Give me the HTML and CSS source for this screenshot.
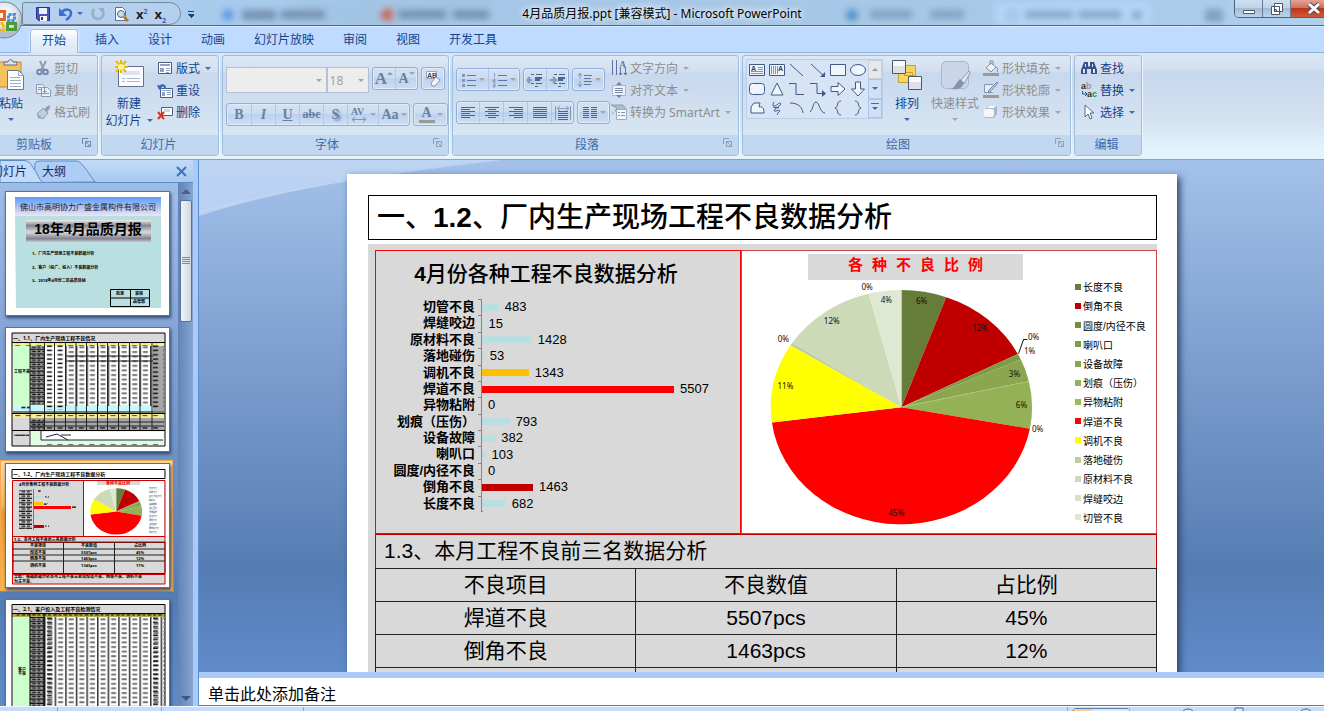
FILE: index.html
```html
<!DOCTYPE html>
<html lang="zh-CN">
<head>
    <meta charset="UTF-8">
    <meta name="viewport" content="width=device-width, initial-scale=1.0">
    <title>4月品质月报.ppt [兼容模式] - Microsoft PowerPoint</title>
    <link rel="stylesheet" href="styles.css">
</head>
<body>
<div class="window">

    <header class="titlebar">
        <svg class="glass" width="1324" height="25" aria-hidden="true">
            <defs><filter id="blur"><feGaussianBlur stdDeviation="3"/></filter></defs>
            <g filter="url(#blur)">
                <path d="M300 0h200l-60 25H260z" fill="#9dbfe0" opacity=".5"/>
                <circle cx="228" cy="15" r="6" fill="#5f9be6"/>
                <path d="M242 10h34v10h-34zM281 10h44v9h-44z" fill="#65809f" opacity=".75"/>
                <path d="M378 15l9-8v16zM386 8h7v13h-7z" fill="#c4705c"/>
                <path d="M398 10h48v9h-48zM453 10h36v9h-36z" fill="#65809f" opacity=".75"/>
                <circle cx="852" cy="15" r="6" fill="#3e84c0" opacity=".8"/>
                <path d="M870 10h42v9h-42zM930 10h34v9h-34z" fill="#7896b8" opacity=".7"/>
                <path d="M995 3h155v22H995z" fill="#b5d6f8"/>
                <circle cx="1012" cy="15" r="5" fill="none" stroke="#7fa4cc" stroke-width="2"/>
                <path d="M1025 10h48v9h-48zM1078 10h44v9h-44z" fill="#7896b8" opacity=".7"/>
                <path d="M1132 11h10v8h-10zM1205 9h18v13h-18z" fill="#6e8fb2" opacity=".7"/>
            </g>
        </svg>
        <div class="quick-access">
            <button class="qa" aria-label="保存"><svg width="16" height="16"><path d="M1.500 1.500h13v13h-11l-2-2z" fill="#4a53c0" stroke="#2b2f8c"/><path d="M4 2h8v6H4z" fill="#e9f0fb"/><path d="M5 10h7v5H5z" fill="#f5f5f5"/><path d="M6 11h2v3H6z" fill="#2b2f8c"/></svg></button>
            <button class="qa" aria-label="撤消"><svg width="16" height="16"><path d="M3 7c4-5 10-4 10 0 0 3-2 5-5 7" fill="none" stroke="#3a6fd0" stroke-width="2.500"/><path d="M1 2v8h8z" fill="#3a6fd0"/></svg><i class="caret"></i></button>
            <button class="qa" aria-label="恢复" disabled><svg width="16" height="16"><path d="M4 3C1 7 3 13 8 13s7-6 4-9" fill="none" stroke="#97aec9" stroke-width="2.500"/><path d="M8 2h6v6z" fill="#97aec9"/></svg></button>
            <button class="qa" aria-label="打印预览"><svg width="16" height="16"><path d="M2.500 1.500h7l3 3v10h-10z" fill="#fff" stroke="#5c6f8d"/><circle cx="8" cy="8" r="3.500" fill="#c5e1f8" stroke="#4d5d78"/><path d="M11 11l4 4" stroke="#b27a20" stroke-width="3"/></svg></button>
            <button class="qa" aria-label="上标"><span class="script">x<sup>2</sup></span></button>
            <button class="qa" aria-label="下标"><span class="script">x<sub>2</sub></span></button>
        </div>
        <h1 class="title">4月品质月报.ppt [兼容模式] - Microsoft PowerPoint</h1>
        <div class="window-buttons">
            <button aria-label="最小化"><svg width="14" height="14"><path d="M1.500 8.500h11v3h-11z" fill="#fff" stroke="#4b5568"/></svg></button>
            <button aria-label="还原"><svg width="14" height="14"><path d="M4.500 1.500h8v8h-8zM1.500 4.500h8v8h-8z" fill="#fff" stroke="#4b5568"/><path d="M4.500 7.500h2v2h-2z" fill="#a9c3df" stroke="#4b5568"/></svg></button>
            <button class="close" aria-label="关闭"><svg width="14" height="14"><path d="M2 2l10 9M12 2L2 11" stroke="#4a4d5c" stroke-width="5"/><path d="M2 2l10 9M12 2L2 11" stroke="#fff" stroke-width="3"/></svg></button>
        </div>
        <button class="orb" aria-label="Office 按钮"><svg width="40" height="42">
            <defs><radialGradient id="orbFill" cx=".5" cy=".35"><stop offset="0" stop-color="#fff"/><stop offset=".65" stop-color="#e3e8f0"/><stop offset="1" stop-color="#b4bfce"/></radialGradient></defs>
            <circle cx="20" cy="21" r="18" fill="url(#orbFill)" stroke="#6f86a5"/>
            <g fill="none" stroke-width="3">
                <path d="M13.500 12.500h7v8h-7z" stroke="#e8641b"/>
                <path d="M24.500 15.500h6v6h-6z" stroke="#4a8fd8" stroke-dasharray="3 1"/>
                <path d="M12.500 24.500h7v7h-7z" stroke="#f2b51c" stroke-dasharray="3 1"/>
                <path d="M23.500 24.500h8v6h-8z" stroke="#4c9a3c"/>
            </g>
        </svg></button>
    </header>

    <nav class="tabs">
        <button class="tab active">开始</button>
        <button class="tab">插入</button>
        <button class="tab">设计</button>
        <button class="tab">动画</button>
        <button class="tab">幻灯片放映</button>
        <button class="tab">审阅</button>
        <button class="tab">视图</button>
        <button class="tab">开发工具</button>
    </nav>

    <div class="ribbon">
        <section class="group group-clipboard">
            <div class="group-body">
                <button class="large large-paste">
                    <svg width="32" height="32"><path d="M3 3h23v25H3z" fill="#f3c25c" stroke="#c08a2c"/><path d="M9 5V3h4c0-3 5-3 5 0h4v3H9z" fill="#dfe3e8" stroke="#646b78"/><path d="M12.500 11.500h11l5 5v14h-16z" fill="#fff" stroke="#66778f"/><path d="M23.500 11.500v5h5M15 18.500h10M15 21.500h11M15 24.500h11M15 27.500h11" fill="none" stroke="#9aadcb"/></svg>
                    <span>粘贴</span><i class="caret"></i>
                </button>
                <div class="stack">
                    <button class="small" disabled><svg width="16" height="16"><path d="M5 1l4 9M11 1L6 10" stroke="#8c9db5" stroke-width="2"/><circle cx="4.500" cy="12" r="2.300" fill="none" stroke="#7488a8" stroke-width="2"/><circle cx="10.500" cy="12" r="2.300" fill="none" stroke="#7488a8" stroke-width="2"/></svg>剪切</button>
                    <button class="small" disabled><svg width="16" height="16"><path d="M1.500 2.500h6l2 2v7h-8zM6.500 5.500h6l3 3v6h-9z" fill="#e9eff7" stroke="#8799b5"/><path d="M8 9.500h4M8 11.500h6M3 5.500h3M3 7.500h3" stroke="#8799b5"/></svg>复制</button>
                    <button class="small" disabled><svg width="16" height="16"><path d="M15 1l-4 2-2 3 3 2 3-4z" fill="#8e9db4"/><path d="M8 4l5 5-5 6-6-5z" fill="#c2cedd" stroke="#8b9bb4"/><path d="M2 10l5 5-4-1z" fill="#8e9db4"/></svg>格式刷</button>
                </div>
            </div>
            <footer><span>剪贴板</span><button class="launcher" aria-label="剪贴板对话框"><svg width="9" height="9"><path d="M.500 6V.500H6M3.500 3.500h5v5h-5zM4 4l4 4" fill="none" stroke="#6c88b0"/></svg></button></footer>
        </section>

        <section class="group group-slides">
            <div class="group-body">
                <button class="large">
                    <svg width="32" height="32"><path d="M5.500 7.500h25v20h-25z" fill="#fafcff" stroke="#62728c"/><path d="M9 12h18v4H9z" fill="#dce4ef"/><path d="M9 19.500h3M14 19.500h13M9 22.500h3M14 22.500h13" stroke="#a6b6ce"/><path d="M8 1v13M2 8h13M3 2l10 11M13 2L3 13" stroke="#f2b800" stroke-width="2"/><circle cx="8" cy="8" r="3" fill="#fff68c"/></svg>
                    <span>新建</span><span>幻灯片<i class="caret"></i></span>
                </button>
                <div class="stack">
                    <button class="small"><svg width="16" height="16"><path d="M1.500 2.500h13v11h-13z" fill="#fff" stroke="#4a5f80"/><path d="M3 4h10v2H3zM3 8h4v4H3z" fill="#8ba2c6"/><path d="M9 8.500h4M9 10.500h4M9 12.500h3" stroke="#8ba2c6"/></svg>版式<i class="caret"></i></button>
                    <button class="small"><svg width="16" height="16"><path d="M3.500 6.500h12v9h-12z" fill="#fff" stroke="#4a5f80"/><path d="M5 8h9v1H5zM5 10h3v4H5z" fill="#8ba2c6"/><path d="M10 10.500h4M10 12.500h4" stroke="#8ba2c6"/><path d="M8 6c0-3-4-4-5-1" fill="none" stroke="#2e67c4" stroke-width="2"/><path d="M0 3l6 1-4 4z" fill="#2e67c4"/></svg>重设</button>
                    <button class="small"><svg width="16" height="16"><path d="M4.500 3.500h11v8h-11z" fill="#fff" stroke="#4a5f80"/><path d="M7 5h6v3H7z" fill="#cbd8ea"/><path d="M1 8l6 7M7 8l-6 7" stroke="#e0301e" stroke-width="2"/></svg>删除</button>
                </div>
            </div>
            <footer><span>幻灯片</span></footer>
        </section>

        <section class="group group-font">
            <div class="group-body rows">
                <div class="tool-row">
                    <label class="combo combo-font"><select aria-label="字体" disabled><option></option></select><i class="caret"></i></label>
                    <label class="combo combo-size"><select aria-label="字号" disabled><option>18</option></select><i class="caret"></i></label>
                    <div class="tools">
                        <button class="w22 glyph big" disabled>A<i class="caret up"></i></button>
                        <button class="w22 glyph" disabled>A<i class="caret"></i></button>
                    </div>
                    <div class="tools">
                        <button class="w22" aria-label="清除格式" disabled><svg width="18" height="18"><path d="M2.500 1.500h10v7h-10z" fill="#fff" stroke="#9aa8bd"/><text x="3" y="8" class="icon-text">AB</text><path d="M7 13l5-6 4 3-5 6H8z" fill="#f3f5f8" stroke="#8495ae"/></svg></button>
                    </div>
                </div>
                <div class="tool-row">
                    <div class="tools">
                        <button class="w24 glyph" disabled>B</button>
                        <button class="w24 glyph italic" disabled>I</button>
                        <button class="w24 glyph underline" disabled>U</button>
                        <button class="w24 glyph strike" disabled>abc</button>
                        <button class="w24 glyph shadow" disabled>S</button>
                        <button class="w32" aria-label="字符间距" disabled><svg width="18" height="18"><text x="1" y="9" class="icon-serif">AV</text><path d="M2 13.500h14M5 11l-3 2.500L5 16M13 11l3 2.500-3 2.500" fill="none" stroke="#8294b2"/></svg><i class="caret"></i></button>
                        <button class="w32 glyph" disabled>Aa<i class="caret"></i></button>
                    </div>
                    <div class="tools">
                        <button class="w34 glyph color" disabled><span>A</span><i class="caret"></i></button>
                    </div>
                </div>
            </div>
            <footer><span>字体</span><button class="launcher" aria-label="字体对话框" disabled><svg width="9" height="9"><path d="M.500 6V.500H6M3.500 3.500h5v5h-5zM4 4l4 4" fill="none" stroke="#8fa0b8"/></svg></button></footer>
        </section>

        <section class="group group-paragraph">
            <div class="group-body">
                <div class="rows">
                    <div class="tool-row">
                        <div class="tools">
                            <button class="w32" aria-label="项目符号" disabled><svg width="16" height="16"><path d="M6 3.500h9M6 8.500h9M6 13.500h9" stroke="#6078a6"/><path d="M1 2h3v3H1zM1 7h3v3H1zM1 12h3v3H1z" fill="#8899b5"/></svg><i class="caret"></i></button>
                            <button class="w32" aria-label="编号" disabled><svg width="16" height="16"><path d="M6 3.500h9M6 8.500h9M6 13.500h9" stroke="#6078a6"/><path d="M2.500 1v4M1 7h2v1.500H1V10h3M1 12h2v3H1M1 13.500h2" fill="none" stroke="#8899b5"/></svg><i class="caret"></i></button>
                        </div>
                        <div class="tools">
                            <button class="w22" aria-label="减少缩进" disabled><svg width="16" height="16"><path d="M4 2.500h3M9 2.500h6M8 5.500h7M8 8.500h5M4 11.500h3M9 11.500h6M8 14.500h3" stroke="#4c6491"/><path d="M8 6.500h7M8 7.500h5" stroke="#4c6491"/><path d="M0 8h5M3 5L0 8l3 3" fill="none" stroke="#8899b5" stroke-width="2"/></svg></button>
                            <button class="w22" aria-label="增加缩进" disabled><svg width="16" height="16"><path d="M4 2.500h3M9 2.500h6M8 5.500h7M8 8.500h5M4 11.500h3M9 11.500h6M8 14.500h3" stroke="#4c6491"/><path d="M8 6.500h7M8 7.500h5" stroke="#4c6491"/><path d="M0 8h5M3 5l3 3-3 3" fill="none" stroke="#8899b5" stroke-width="2"/></svg></button>
                        </div>
                        <div class="tools">
                            <button class="w32" aria-label="行距" disabled><svg width="16" height="16"><path d="M7 3.500h8M7 6.500h7M7 9.500h8M7 12.500h7" stroke="#6078a6"/><path d="M3 1v6M1 4l2-3 2 3M3 9v6M1 12l2 3 2-3" fill="none" stroke="#8899b5"/></svg><i class="caret"></i></button>
                        </div>
                    </div>
                    <div class="tool-row">
                        <div class="tools">
                            <button class="w22" aria-label="左对齐" disabled><svg width="16" height="16"><path d="M1 2.500h14M1 4.500h9M1 6.500h14M1 8.500h9M1 10.500h14M1 12.500h9" stroke="#4c6491"/></svg></button>
                            <button class="w24" aria-label="居中" disabled><svg width="16" height="16"><path d="M1 2.500h14M4 4.500h8M1 6.500h14M4 8.500h8M1 10.500h14M4 12.500h8" stroke="#4c6491"/></svg></button>
                            <button class="w24" aria-label="右对齐" disabled><svg width="16" height="16"><path d="M1 2.500h14M6 4.500h9M1 6.500h14M6 8.500h9M1 10.500h14M6 12.500h9" stroke="#4c6491"/></svg></button>
                            <button class="w24" aria-label="两端对齐" disabled><svg width="16" height="16"><path d="M1 2.500h14M1 4.500h14M1 6.500h14M1 8.500h14M1 10.500h14M1 12.500h14" stroke="#4c6491"/></svg></button>
                            <button class="w22" aria-label="分散对齐" disabled><svg width="16" height="16"><path d="M3 6.500h10M3 8.500h10M3 10.500h10M3 12.500h10M3 14.500h10" stroke="#4c6491"/><path d="M.500 1v14M15.500 1v14M2 3.500h12M5 1L2 3.500 5 6M11 1l3 2.500L11 6" fill="none" stroke="#8899b5"/></svg></button>
                        </div>
                        <div class="tools">
                            <button class="w32" aria-label="分栏" disabled><svg width="16" height="16"><path d="M1 2.500h6M9 2.500h6M1 4.500h6M9 4.500h6M1 6.500h6M9 6.500h6M1 8.500h6M9 8.500h6M1 10.500h6M9 10.500h6M1 12.500h6M9 12.500h6" stroke="#4c6491"/></svg><i class="caret"></i></button>
                        </div>
                    </div>
                </div>
                <div class="stack">
                    <button class="small" disabled><svg width="16" height="16"><path d="M1.500 0v15M5.500 0v15" stroke="#5d73a0"/><path d="M9.500 8v7M14.500 8v7M8 13l1.500 2 1.500-2M13 13l1.500 2 1.500-2" fill="none" stroke="#5d73a0"/><text x="8" y="8" class="icon-serif">A</text></svg>文字方向<i class="caret"></i></button>
                    <button class="small" disabled><svg width="16" height="16"><path d="M1.500 3.500h13v10h-13z" fill="#eef2f8" stroke="#a9b6c9"/><path d="M4 6.500h8M4 8.500h8M4 10.500h8" stroke="#7d8fae"/><path d="M8 0l3 3H5zM8 16l3-3H5z" fill="#6e82a6"/></svg>对齐文本<i class="caret"></i></button>
                    <button class="small" disabled><svg width="16" height="16"><path d="M0 1h12l3 4-2 2H4l2-3z" fill="#b0bccd" stroke="#8d9bb0"/><path d="M1 7l3 3H1z" fill="#b0bccd"/><path d="M5.500 5.500h10v10h-10z" fill="#f2f5f9" stroke="#9cabc2"/><path d="M7 8.500h2M10 8.500h4M7 11.500h2M10 11.500h4" stroke="#8294b2"/></svg>转换为 SmartArt<i class="caret"></i></button>
                </div>
            </div>
            <footer><span>段落</span><button class="launcher" aria-label="段落对话框" disabled><svg width="9" height="9"><path d="M.500 6V.500H6M3.500 3.500h5v5h-5zM4 4l4 4" fill="none" stroke="#8fa0b8"/></svg></button></footer>
        </section>

        <section class="group group-drawing">
            <div class="group-body">
                <div class="gallery">
                    <div class="shapes">
                        <button aria-label="文本框"><svg width="18" height="18"><path d="M1.500 3.500h15v11h-15z"/><path d="M10 6.500h5M10 8.500h5M3 10.500h12M3 12.500h12" stroke="#7f94b8"/><text x="3" y="10" class="icon-text">A</text></svg></button>
                        <button aria-label="垂直文本框"><svg width="18" height="18"><path d="M1.500 3.500h15v11h-15z"/><path d="M3.500 5v8M5.500 5v8M7.500 5v8M9.500 5v8" stroke="#7f94b8"/><text x="10" y="10" class="icon-text">A</text></svg></button>
                        <button aria-label="直线"><svg width="18" height="18"><path d="M2 3l13 12"/></svg></button>
                        <button aria-label="箭头"><svg width="18" height="18"><path d="M2 3l13 12"/><path d="M16 16h-5l5-5z" class="solid"/></svg></button>
                        <button aria-label="矩形"><svg width="18" height="18"><path d="M1.500 3.500h15v11h-15z"/></svg></button>
                        <button aria-label="椭圆"><svg width="18" height="18"><ellipse cx="9" cy="9" rx="7.500" ry="5.500"/></svg></button>
                        <button aria-label="圆角矩形"><svg width="18" height="18"><rect x="1.500" y="3.500" width="15" height="11" rx="3"/></svg></button>
                        <button aria-label="三角形"><svg width="18" height="18"><path d="M9 3l6 12H3z"/></svg></button>
                        <button aria-label="肘形连接符"><svg width="18" height="18"><path d="M1 3.500h7v11h8" class="open"/></svg></button>
                        <button aria-label="肘形箭头"><svg width="18" height="18"><path d="M1 3.500h7v10h7" class="open"/><path d="M13 10l4 3.500-4 3.500z" class="solid"/></svg></button>
                        <button aria-label="右箭头"><svg width="18" height="18"><path d="M2 6.500h7v-4l7 6.500-7 6.500v-4H2z"/></svg></button>
                        <button aria-label="下箭头"><svg width="18" height="18"><path d="M6.500 2v7h-4L9 16l6.500-7h-4V2z"/></svg></button>
                        <button aria-label="任意多边形"><svg width="18" height="18"><path d="M3 8l3-4h6l-1 4c4-1 5 2 5 6H3z"/></svg></button>
                        <button aria-label="自由曲线"><svg width="18" height="18"><path d="M6 3c-3 5 1 5 4 2s4 1 0 3-5 5-2 4 5-1 3 1-2 1-1 3M5 8l6 1" class="open"/></svg></button>
                        <button aria-label="弧形"><svg width="18" height="18"><path d="M2 4c7 0 12 3 13 10" class="open"/></svg></button>
                        <button aria-label="曲线"><svg width="18" height="18"><path d="M1 13C4 11 4 3 7 3s4 11 9 11" class="open"/></svg></button>
                        <button aria-label="左大括号"><svg width="18" height="18"><path d="M12 2c-5 0-2 6-6 7 4 1 1 7 6 7" class="open"/></svg></button>
                        <button aria-label="右大括号"><svg width="18" height="18"><path d="M6 2c5 0 2 6 6 7-4 1-1 7-6 7" class="open"/></svg></button>
                    </div>
                    <div class="gallery-scroll">
                        <button aria-label="上一行" disabled><i class="caret up"></i></button>
                        <button aria-label="下一行"><i class="caret"></i></button>
                        <button class="more" aria-label="其他"><i class="caret"></i></button>
                    </div>
                </div>
                <button class="large">
                    <svg width="32" height="32"><path d="M13.500 6.500h11v10h-11zM7.500 13.500h14v10h-14z" fill="#f5d55b" stroke="#c4a02f"/><path d="M1.500 1.500h13v13h-13zM17.500 17.500h13v13h-13z" fill="#dde0e6" stroke="#4f5866"/><path d="M2 2h12v5H2zM18 18h12v5H18z" fill="#f8f9fb"/></svg>
                    <span>排列</span><i class="caret"></i>
                </button>
                <button class="large large-wide" disabled>
                    <svg width="32" height="32"><rect x="2.500" y="2.500" width="27" height="27" rx="5" fill="#cad6e8" stroke="#a5b5cc"/><path d="M30 12l-8 9 3 4 6-11z" fill="#dfe5ee" stroke="#8f9db4"/><path d="M21 20l4 4c-2 6-7 7-13 6 5-2 5-7 9-10z" fill="#8493ae"/></svg>
                    <span>快速样式</span><i class="caret"></i>
                </button>
                <div class="stack">
                    <button class="small" disabled><svg width="16" height="16"><path d="M3 8l5-5 5 4-5 5z" fill="#f1f4f8" stroke="#7c8fae"/><path d="M7 5V1h3v4M13 7c2 1 2 3 1 5" fill="none" stroke="#7c8fae"/><path d="M0 13h16v3H0z" fill="#9a9a9a"/></svg>形状填充<i class="caret"></i></button>
                    <button class="small" disabled><svg width="16" height="16"><path d="M10 2.500H1.500v8H10" fill="#e8edf4" stroke="#8496b3"/><path d="M15 1L7 10l-2 1 1-3 8-8z" fill="#c4cedd" stroke="#7486a5"/><path d="M0 13h16v3H0z" fill="#9a9a9a"/></svg>形状轮廓<i class="caret"></i></button>
                    <button class="small" disabled><svg width="16" height="16"><path d="M5 2h9v8l-3 4H2V6z" fill="#a9b7ca"/><rect x="1" y="5" width="10" height="8" rx="2" fill="#f5f7fa"/><path d="M4 4l2-2h7l-2 2z" fill="#f5f7fa"/></svg>形状效果<i class="caret"></i></button>
                </div>
            </div>
            <footer><span>绘图</span><button class="launcher" aria-label="绘图对话框" disabled><svg width="9" height="9"><path d="M.500 6V.500H6M3.500 3.500h5v5h-5zM4 4l4 4" fill="none" stroke="#8fa0b8"/></svg></button></footer>
        </section>

        <section class="group group-editing">
            <div class="group-body">
                <div class="stack">
                    <button class="small"><svg width="16" height="16"><path d="M3 2h4v4l1 1 1-1V2h4l3 8v4h-6V9H6v5H0v-4z" fill="#35518a"/><path d="M2 9h2v4H2zM12 9h2v4h-2zM4 4h1v3H4zM11 4h1v3h-1z" fill="#dbe8f8"/></svg>查找</button>
                    <button class="small"><svg width="16" height="16"><text x="0" y="7" class="icon-ab">a<tspan fill="#9a9a9a">b</tspan></text><text x="6" y="15" class="icon-ab">a<tspan fill="#159a2c">c</tspan></text><path d="M1.500 9v3H5M4 10l2 2-2 2" fill="none" stroke="#35518a"/></svg>替换<i class="caret"></i></button>
                    <button class="small"><svg width="16" height="16"><path d="M4 1v12l3-3 2 5 2-1-2-5h4z" fill="#fff" stroke="#586a86"/></svg>选择<i class="caret"></i></button>
                </div>
            </div>
            <footer><span>编辑</span></footer>
        </section>
    </div>

    <main class="workspace">
        <aside class="pane">
            <header class="pane-header">
                <svg class="pane-shape" width="100" height="23" aria-hidden="true"><path d="M34 22.500L35 4q0-3 4-3h37c5 0 9 7 19 21z" fill="#aecdf4" stroke="#5b8cc4"/><path d="M0 .500h24c6 0 8 6 11 10s3 8 8 12H0z" fill="#c3daf8" stroke="#5b8cc4"/></svg>
                <button class="pane-tab">幻灯片</button>
                <button class="pane-tab">大纲</button>
                <button class="pane-close" aria-label="关闭"><svg width="11" height="11"><path d="M1 1l9 9M10 1l-9 9" stroke="#3e74b4" stroke-width="2"/></svg></button>
            </header>
            <ol class="thumbs">
                <li>
                    <svg viewBox="0 0 165 125">
                        <defs>
                            <linearGradient id="sky" x2="0" y2="1"><stop offset="0" stop-color="#5c9bf8"/><stop offset="1" stop-color="#f1e4f3"/></linearGradient>
                            <linearGradient id="metal" x2="0" y2="1"><stop offset="0" stop-color="#eee"/><stop offset=".25" stop-color="#858591"/><stop offset=".55" stop-color="#d8d8df"/><stop offset=".85" stop-color="#82828f"/><stop offset="1" stop-color="#c9c9d0"/></linearGradient>
                            <pattern id="cells" x="39" width="10.600" height="4.600" patternUnits="userSpaceOnUse"><path d="M0 0h1.500v4.600H0z" fill="#333"/><path d="M3.500 1h5v2h-5z" fill="#777"/></pattern>
                            <pattern id="scribble" width="10.500" height="4.300" patternUnits="userSpaceOnUse"><path d="M0 1h10M1 3h3M6 3h4" stroke="#111" stroke-width="1.300"/></pattern>
                            <pattern id="dots" x="39" width="10.600" height="4.300" patternUnits="userSpaceOnUse"><path d="M3 2h5" stroke="#111" stroke-width="1.500"/></pattern>
                        </defs>
                        <path d="M10 24h146v93H11z" fill="#b9dfe1"/><path d="M10 6h146v19H10z" fill="url(#sky)"/>
                        <path d="M21 29h125v22H21z" fill="url(#metal)"/>
                        <text x="83" y="19" class="thumb-company">佛山市高明协力广盛金属构件有限公司</text>
                        <text x="83" y="43" class="thumb-title">18年4月品质月报</text>
                        <g class="thumb-text"><text x="27" y="64">1、厂内生产现场工程不良数据分析</text><text x="27" y="78">2、客户（投广、投入）不良数据分析</text><text x="27" y="91">3、2018年4月份二层品质目标</text></g>
                        <path d="M105.500 98.500h39v17h-39zM105 107h39M125.500 98v17" fill="none" stroke="#000"/>
                        <g class="thumb-cell"><text x="115" y="104">批准</text><text x="134" y="104">审核</text><text x="134" y="112">品管部</text></g>
                    </svg>
                </li>
                <li>
                    <svg viewBox="0 0 165 125">
                        <path d="M7 6h153v113H7z" fill="#fff"/><path d="M7 6h153v10H7zM7 91h18v28H7z" fill="#d9d9d9"/>
                        <path d="M7 16h153v3H7zM7 87h153v4H7z" fill="#f5f08d"/><path d="M8 19h17v59H8z" fill="#ccffcc"/>
                        <path d="M25 19h14v59H25zM148 19h11v65h-11zM25 91h134v12H25z" fill="#a6a6a6"/>
                        <path d="M8 78h140v6H8z" fill="#c4f8fb"/><path d="M8 84h151v2H8z" fill="#777"/>
                        <path d="M60 19h88v60H60z" fill="url(#cells)"/>
                        <path d="M25 19h14v59H25z" fill="url(#scribble)"/>
                        <path d="M39 19h21v64H39zM148 19h11v62h-11zM10 16h148v3H10zM10 88h148v3H10zM39 99h119v4H39z" fill="url(#dots)"/>
                        <path d="M26 92h13v11H26zM16 79h9v3h-9zM9 107h15v2H9z" fill="url(#scribble)"/>
                        <path d="M39.500 16v87M49.500 16v87M60.500 16v87M71 16v87M81.500 16v87M92.500 16v87M102.500 16v87M113.500 16v87M124.500 16v87M135 16v87M147 16v87M25 16v103M25 95h134M25 99h134" stroke="#222" fill="none"/>
                        <path d="M60 29h88M60 34h88" stroke="#222"/>
                        <path d="M26 104h133v14H26z" fill="#e0ffe0"/><path d="M36 105h122v8H36z" fill="#fff"/><path d="M36 104v9h122M41 110l11-3 11 6M56 108h10" fill="none" stroke="#224"/>
                        <path d="M38 115h118v3H38z" fill="url(#dots)"/>
                        <path d="M7 6h153v113H7zM7 15.500h153M7 86.500h153M7 103.500h153" fill="none" stroke="#000"/>
                        <text x="8" y="13" class="thumb-heading">一、1.1、厂内生产现场工程不良情况</text>
                        <text x="9" y="46" class="thumb-text">工程不良</text>
                    </svg>
                </li>
                <li class="selected">
                    <svg viewBox="0 0 165 125">
                        <path d="M8 17h152v104H8z" fill="#d9d9d9"/><path d="M79 18h80v55H79z" fill="#fff"/>
                        <path d="M7 6.500h153v9H7z" fill="#fff" stroke="#000"/>
                        <text x="8" y="13" class="thumb-heading">一、1.2、厂内生产现场工程不良数据分析</text>
                        <text x="14" y="23" class="thumb-text">4月份各种工程不良数据分析</text>
                        <path d="M92 18h43v4H92z" fill="#d9d9d9"/>
                        <use href="#pie" transform="translate(-69 -33) scale(.2)"/>
                        <path d="M29 43h37v3H29z" fill="#f00"/><path d="M29 39h9v3h-9z" fill="#ffc000"/><path d="M29 62h10v3H29z" fill="#c00000"/><path d="M29 33h9v2h-9zM29 52h5v2h-5z" fill="#b9dfe1"/>
                        <path d="M14 27h13v39H14zM33 27h3v2h-3zM40 33h4v2h-4zM39 40h4v2h-4zM67 43h4v2h-4zM40 62h4v2h-4z" fill="url(#scribble)"/><path d="M28.500 26v41" stroke="#777"/>
                        <text x="113" y="22" class="thumb-red">各种不良比例</text>
                        <g transform="translate(144 24)" class="thumb-legend"><text y="2">长度不良</text><text y="6">倒角不良</text><text y="10">圆度/内径不良</text><text y="14">喇叭口</text><text y="18">设备故障</text><text y="22">划痕压伤</text><text y="26">异物粘附</text><text y="30">焊道不良</text><text y="34">调机不良</text><text y="38">落地碰伤</text><text y="42">原材料不良</text><text y="46">切管不良</text></g>
                        <text x="9" y="78" class="thumb-text">1.3、本月工程不良前三名数据分析</text>
                        <path d="M8 79.500h152M8 86h152M8 92h152M8 98h152M8 110.500h152M8 79v31M58.500 79v31M109.500 79v31M160 79v31" fill="none" stroke="#222"/>
                        <g class="thumb-cell"><text x="33" y="84">不良项目</text><text x="84" y="84">不良数值</text><text x="135" y="84">占比例</text><text x="33" y="91">焊道不良</text><text x="84" y="91">5507pcs</text><text x="135" y="91">45%</text><text x="33" y="97">倒角不良</text><text x="84" y="97">1463pcs</text><text x="135" y="97">12%</text><text x="33" y="104">调机不良</text><text x="84" y="104">1343pcs</text><text x="135" y="104">11%</text></g>
                        <g class="thumb-text"><text x="9" y="115">总结：根据数据分析本月工程不良主要是焊道不良、倒角不良、调机不良</text><text x="9" y="120">为主不良。</text></g>
                        <path d="M7.500 17.500H160V121H7.500zM78.500 17v56M7 73.500h153M7 79h153M7 111.500h153" fill="none" stroke="#d00000"/>
                    </svg>
                </li>
                <li>
                    <svg viewBox="0 0 165 125">
                        <path d="M7 5h153v10H7z" fill="#d9d9d9"/><path d="M7 15h153v3H7z" fill="#b5b04b"/><path d="M8 18h17v107H8z" fill="#ccffcc"/><path d="M25 18h14v107H25z" fill="#a6a6a6"/>
                        <path d="M39 18h121v107H39z" fill="url(#cells)"/><path d="M25 18h14v107H25zM10 15h148v2H10z" fill="url(#scribble)"/><path d="M39 18h11v107H39zM148 18h11v107h-11z" fill="url(#dots)"/>
                        <path d="M7 125V5.500h153V125M7 14.500h153M25 15v110M39 15v110" fill="none" stroke="#000"/>
                        <text x="8" y="12" class="thumb-heading">一、2.1、客户投入及工程不良检测情况</text>
                        <text x="13" y="72" class="thumb-text">客户</text><text x="13" y="76" class="thumb-text">不良</text>
                    </svg>
                </li>
            </ol>
            <div class="scrollbar">
                <i class="caret up"></i>
                <span class="scroll-thumb"></span>
                <i class="caret down"></i>
            </div>
        </aside>

        <section class="editor">
            <div class="stage">
                <svg class="swoosh" width="300" height="60" aria-hidden="true"><path d="M0 0h300Q110 20 0 56z" fill="#c7dcf6" opacity=".7"/><path d="M0 52Q110 22 300 0" fill="none" stroke="#c9ddf6" opacity=".6"/></svg>
                <article class="slide">
                    <h2 class="slide-title">一、<b>1.2</b>、厂内生产现场工程不良数据分析</h2>
                    <div class="slide-content">
                        <div class="charts">
                            <div class="bar-chart">
                                <h3><b>4</b>月份各种工程不良数据分析</h3>
                                <dl class="bars">
                                    <dt>切管不良</dt><dd><i style="--v: 483"></i>483</dd>
                                    <dt>焊缝咬边</dt><dd><i style="--v: 15"></i>15</dd>
                                    <dt>原材料不良</dt><dd><i style="--v: 1428"></i>1428</dd>
                                    <dt>落地碰伤</dt><dd><i style="--v: 53"></i>53</dd>
                                    <dt>调机不良</dt><dd><i class="orange" style="--v: 1343"></i>1343</dd>
                                    <dt>焊道不良</dt><dd><i class="red" style="--v: 5507"></i>5507</dd>
                                    <dt>异物粘附</dt><dd><i style="--v: 0"></i>0</dd>
                                    <dt>划痕（压伤）</dt><dd><i style="--v: 793"></i>793</dd>
                                    <dt>设备故障</dt><dd><i style="--v: 382"></i>382</dd>
                                    <dt>喇叭口</dt><dd><i style="--v: 103"></i>103</dd>
                                    <dt>圆度/内径不良</dt><dd><i style="--v: 0"></i>0</dd>
                                    <dt>倒角不良</dt><dd><i class="dark-red" style="--v: 1463"></i>1463</dd>
                                    <dt>长度不良</dt><dd><i style="--v: 682"></i>682</dd>
                                </dl>
                            </div>
                            <div class="pie-chart">
                                <div class="pie-main">
                                    <h3>各 种 不 良 比 例</h3>
                                    <svg viewBox="743 281 330 250">
                                        <g id="pie">
                                            <path d="M901 407V291A129.500 116 0 0 1 945.400 298z" fill="#657d38"/>
                                            <path d="M901 407L945.400 298A129.500 116 0 0 1 1016.400 354.400z" fill="#c00000"/>
                                            <path d="M901 407L1016.400 354.400A129.500 116 0 0 1 1019.400 359.900z" fill="#7d9c46"/>
                                            <path d="M901 407L1019.400 359.900A129.500 116 0 0 1 1027.300 381.500z" fill="#8ba64e"/>
                                            <path d="M901 407L1027.300 381.500A129.500 116 0 0 1 1028.300 428.300z" fill="#94b255"/>
                                            <path d="M901 407L1028.300 428.300A129.500 116 0 0 1 772.600 422.300z" fill="#ff0000"/>
                                            <path d="M901 407L772.600 422.300A129.500 116 0 0 1 791.100 345.700z" fill="#ffff00"/>
                                            <path d="M901 407L791.100 345.700A129.500 116 0 0 1 792.900 343.100z" fill="#bccda3"/>
                                            <path d="M901 407L792.900 343.100A129.500 116 0 0 1 868.400 294.700z" fill="#cddab8"/>
                                            <path d="M901 407L868.400 294.700A129.500 116 0 0 1 901 291z" fill="#dfe8d3"/>
                                        </g>
                                        <path d="M901 407L1027 381.500" stroke="#b4c88b" stroke-dasharray="3 2"/>
                                        <path d="M1017 354l5-14h4" fill="none" stroke="#222"/>
                                        <g class="pie-labels">
                                            <text x="921" y="305">6%</text><text x="979" y="332">12%</text><text x="1032" y="340">0%</text><text x="1028" y="354">1%</text>
                                            <text x="1013" y="377">3%</text><text x="1020" y="408">6%</text><text x="1036" y="432">0%</text><text x="896" y="515">45%</text>
                                            <text x="786" y="389">11%</text><text x="784" y="342">0%</text><text x="832" y="325">12%</text><text x="867" y="291">0%</text><text x="886" y="304">4%</text>
                                        </g>
                                    </svg>
                                </div>
                                <ul class="legend">
                                    <li><i class="c1"></i>长度不良</li>
                                    <li><i class="c2"></i>倒角不良</li>
                                    <li><i class="c3"></i>圆度/内径不良</li>
                                    <li><i class="c4"></i>喇叭口</li>
                                    <li><i class="c5"></i>设备故障</li>
                                    <li><i class="c6"></i>划痕（压伤）</li>
                                    <li><i class="c7"></i>异物粘附</li>
                                    <li><i class="c8"></i>焊道不良</li>
                                    <li><i class="c9"></i>调机不良</li>
                                    <li><i class="c10"></i>落地碰伤</li>
                                    <li><i class="c11"></i>原材料不良</li>
                                    <li><i class="c12"></i>焊缝咬边</li>
                                    <li><i class="c13"></i>切管不良</li>
                                </ul>
                            </div>
                        </div>
                        <p class="section-title">1.3、本月工程不良前三名数据分析</p>
                        <table>
                            <tr><th>不良项目</th><th>不良数值</th><th>占比例</th></tr>
                            <tr><td>焊道不良</td><td>5507pcs</td><td>45%</td></tr>
                            <tr><td>倒角不良</td><td>1463pcs</td><td>12%</td></tr>
                            <tr><td></td><td></td><td></td></tr>
                        </table>
                    </div>
                </article>
            </div>
            <textarea class="notes" aria-label="备注" placeholder="单击此处添加备注"></textarea>
        </section>
    </main>

    <footer class="status">
        <span class="cell cell-slide"></span>
        <span class="cell cell-theme"></span>
        <span class="cell cell-lang"></span>
        <span class="cell cell-fill"></span>
        <span class="views"><button aria-label="普通视图"></button><button aria-label="幻灯片浏览"></button><button aria-label="幻灯片放映"></button></span>
        <svg class="zoom" width="190" height="20" aria-hidden="true"><path d="M44 8.500h120" stroke="#5b7fb0"/><circle cx="54" cy="9" r="7" fill="#e3eefc" stroke="#44618d"/><path d="M101 1h8v8l-4 4-4-4z" fill="#e3eefc" stroke="#44618d"/><circle cx="172" cy="9" r="7" fill="#e3eefc" stroke="#44618d"/></svg>
    </footer>
</div>
</body>
</html>
```

FILE: styles.css
```css
* {
    box-sizing: border-box;
}
body {
    margin: 0;
    font-family: "Noto Sans", "Noto Sans CJK SC", sans-serif;
    font-size: 12px;
    color: #15428b;
}
button {
    font: inherit;
    color: inherit;
    background: none;
    border: none;
    padding: 0;
    margin: 0;
}
svg {
    display: block;
    flex: none;
}
.window {
    display: flex;
    flex-direction: column;
    height: 100vh;
    overflow: hidden;
    background: #bfdbff;
}
.caret {
    display: inline-block;
    flex: none;
    border: 3px solid transparent;
    border-top-color: #3c6cb0;
    border-bottom: 0;
}
button:disabled .caret {
    border-top-color: #a5a5a5;
}
.caret.up, button:disabled .caret.up {
    border-top: 0;
    border-bottom: 3px solid #9a9a9a;
}

/* title bar */
.titlebar {
    position: relative;
    display: grid;
    grid-template-columns: 1fr auto 1fr;
    height: 26px;
    flex: none;
    background: linear-gradient(90deg, #b9ddec, #a9cbec 15%, #a5c6e6 40%, #a9c8e6 75%, #aecfee);
    border-bottom: 1px solid #4f6984;
}
.glass {
    position: absolute;
    left: 0;
    top: 0;
}
.quick-access {
    position: relative;
    display: flex;
    align-items: center;
    gap: 7px;
    width: 159px;
    height: 23px;
    margin: 2px 0 0 22px;
    padding-left: 12px;
    border: 1px solid #74879c;
    border-radius: 2px 12px 12px 2px;
    background: #b5d0ee;
}
.quick-access::after {
    content: "";
    position: absolute;
    right: -14px;
    top: 8px;
    width: 6px;
    height: 6px;
    border-top: 1px solid #15428b;
    background: conic-gradient(from -45deg at 50% 100%, #15428b 90deg, transparent 0) 0 2px / 6px 4px no-repeat;
}
.qa {
    display: flex;
    align-items: center;
    gap: 3px;
}
.script {
    font-size: 13px;
    font-weight: bold;
    line-height: 16px;
    color: #222;
}
.script sup, .script sub {
    font-size: 7px;
    line-height: 0;
    color: #2b5fb8;
}
.title {
    position: relative;
    margin: 0;
    font-size: 12px;
    font-weight: normal;
    line-height: 27px;
    color: #000;
    text-shadow: 0 0 8px #fff, 0 0 6px #fff;
}
.window-buttons {
    position: relative;
    display: flex;
    justify-self: end;
    height: 18px;
    margin-right: -14px;
    border: 1px solid #4e6178;
    border-top: 0;
    border-radius: 0 0 5px 5px;
    overflow: hidden;
}
.window-buttons button {
    display: flex;
    align-items: center;
    justify-content: center;
    width: 28px;
    border-right: 1px solid #6a7c92;
    background: linear-gradient(#cfdff0, #c0d3e8 45%, #a3bcd6 50%, #bdd4ea);
}
.window-buttons .close {
    width: 46px;
    border: 0;
    background: linear-gradient(#e3a396, #d2705c 45%, #bf3418 50%, #cd5a3c);
}
.orb {
    position: absolute;
    left: -16px;
    top: -1px;
    z-index: 2;
}

/* ribbon tabs */
.tabs {
    display: flex;
    gap: 5px;
    height: 27px;
    flex: none;
    padding: 2px 0 0 30px;
    border-bottom: 1px solid #8fb1e2;
    border-top: 1px solid #d9eaff;
}
.tab {
    padding: 0 11px 2px;
    border: 1px solid transparent;
    border-bottom: 0;
    line-height: 20px;
}
.tab.active {
    margin-bottom: -1px;
    border-color: #9cbce6;
    border-radius: 3px 3px 0 0;
    background: linear-gradient(#fff, #e9f1fb 40%, #dce7f5);
    box-shadow: 0 0 3px #fff;
}

/* ribbon */
.ribbon {
    display: flex;
    gap: 3px;
    height: 107px;
    flex: none;
    padding: 2px 0 3px;
    margin-left: -13px;
    background: linear-gradient(#dbe6f4, #d3e0f1 15%, #c8d8ed 17%, #d2e0f0 60%, #e2f3fd 92%);
    border-bottom: 1px solid #7ba7d6;
}
.group {
    display: flex;
    flex-direction: column;
    flex: none;
    border: 1px solid #9fbedd;
    border-radius: 3px;
    background: linear-gradient(#dee8f5, #d2dfef 16%, #c8d8ed 17%, #d8e6f3 80%);
    box-shadow: 1px 1px 0 #eef6fd;
}
.group-clipboard { width: 111px; }
.group-slides { width: 118px; }
.group-font { width: 227px; }
.group-paragraph { width: 287px; }
.group-drawing { width: 329px; }
.group-editing { width: 68px; }
.group-body {
    display: flex;
    flex: 1;
    gap: 4px;
    padding: 1px 3px 0;
}
.group footer {
    display: flex;
    height: 20px;
    line-height: 20px;
    padding-right: 3px;
    background: #c1d8f0;
    color: #3e6aaa;
}
.group footer span {
    flex: 1;
    text-align: center;
}
.launcher {
    width: 14px;
    padding: 3px 0 0 2px;
    align-self: flex-start;
}
.large {
    display: flex;
    flex-direction: column;
    align-items: center;
    align-self: flex-start;
    width: 40px;
    margin-top: 2px;
    line-height: 17px;
    white-space: nowrap;
}
.large svg {
    margin-bottom: 4px;
}
.large > .caret {
    margin-top: 6px;
}
.large span .caret {
    margin: 0 0 3px 5px;
}
.large-wide, .group-slides .large {
    width: 48px;
}
.stack {
    display: flex;
    flex-direction: column;
}
.small {
    display: flex;
    align-items: center;
    gap: 3px;
    height: 22px;
    white-space: nowrap;
}
.small .caret {
    margin-left: 2px;
}
.large:disabled, .small:disabled {
    color: #8d8d8d;
}
.group-editing .group-body {
    padding-left: 6px;
}
.group-paragraph .group-body {
    gap: 1px;
}
.rows {
    display: flex;
    flex-direction: column;
    gap: 10px;
    padding-top: 11px;
}
.tool-row {
    display: flex;
    gap: 3px;
    height: 23px;
}
.group-font .tool-row:first-child {
    height: 26px;
}
.tools {
    display: flex;
    height: 23px;
    border: 1px solid #8fb0dc;
    border-radius: 3px;
    background: linear-gradient(#d3e1f4, #cbdcf2 45%, #bdd2ee 50%, #ccdef4);
    box-shadow: inset 0 0 0 1px #dfebf9;
}
.tools button {
    display: flex;
    align-items: center;
    justify-content: center;
    gap: 2px;
    color: #6c7f9f;
}
.tools button + button {
    border-left: 1px solid #b0c8e6;
}
.w22 { width: 22px; }
.w24 { width: 24px; }
.w32 { width: 31px; }
.w34 { width: 33px; }
.glyph {
    font-family: "Liberation Serif", serif;
    font-size: 14px;
    font-weight: bold;
}
.w22.glyph {
    gap: 0;
}
.w22.glyph .caret {
    align-self: flex-start;
    margin-top: 4px;
}
.glyph.big { font-size: 17px; }
.italic { font-style: italic; }
.underline { text-decoration: underline; }
.glyph.strike {
    font-size: 12px;
    text-decoration: line-through;
}
.shadow { text-shadow: 2px 2px 2px #6f8db5; }
.color span {
    width: 16px;
    line-height: 14px;
    border-bottom: 3px solid #9a9a9a;
}
.combo {
    display: flex;
    align-items: center;
    height: 26px;
    padding: 0 4px 0 2px;
    border: 1px solid #b3c2d6;
    background: #ededed;
}
.combo select {
    flex: 1;
    min-width: 0;
    appearance: none;
    border: 0;
    padding: 0;
    background: none;
    font: inherit;
    color: #a0a0a0;
    opacity: 1;
}
.combo .caret {
    border-top-color: #a5a5a5;
}
.combo-font {
    width: 102px;
    margin-right: -3px;
}
.combo-size {
    width: 43px;
}
.icon-text {
    font: bold 7px "Liberation Sans", sans-serif;
    fill: #33435e;
    stroke: none;
}
.icon-serif {
    font: bold 10px "Liberation Serif", serif;
    fill: #6c7f9f;
}
.icon-ab {
    font: bold 9px "Liberation Sans", sans-serif;
    fill: #333;
}

/* shape gallery */
.gallery {
    display: flex;
    width: 137px;
    height: 60px;
    margin-top: 2px;
    border: 1px solid #b8cfea;
    background: #d6e4f5;
}
.shapes {
    display: grid;
    flex: 1;
    grid-template-columns: repeat(6, 1fr);
    justify-items: center;
    align-items: center;
}
.shapes svg {
    fill: #eef5fd;
    stroke: #3f5a88;
}
.shapes .open {
    fill: none;
}
.shapes .solid {
    fill: #3f5a88;
    stroke: none;
}
.gallery-scroll {
    display: grid;
    width: 14px;
    grid-template-rows: repeat(3, 1fr);
}
.gallery-scroll button {
    display: grid;
    place-items: center;
    border: 1px solid #a9c6ea;
    background: #cfe0f5;
}
.gallery-scroll button:disabled {
    background: #e6e8ea;
    border-color: #c8d0da;
}
.more .caret {
    position: relative;
}
.more .caret::before {
    content: "";
    position: absolute;
    left: -4px;
    top: -7px;
    width: 8px;
    height: 1px;
    background: #3c6cb0;
}

/* workspace */
.workspace {
    display: grid;
    grid-template-columns: 193px 1fr;
    gap: 5px;
    flex: 1;
    min-height: 0;
    background: #a9cbf9;
}
.pane {
    display: grid;
    grid-template-columns: 1fr 15px;
    grid-template-rows: 23px 1fr;
    min-height: 0;
    background: linear-gradient(#a3c1ea, #7c9dce 40%, #557db3 80%, #5f8bc9);
}
.pane-header {
    position: relative;
    z-index: 0;
    grid-column: 1 / 3;
    display: flex;
    align-items: center;
    gap: 15px;
    padding-right: 6px;
    border-bottom: 1px solid #5b8cc4;
    background: linear-gradient(#c4dbf8, #a7c8f1);
}
.pane-shape {
    position: absolute;
    left: 0;
    top: 0;
    z-index: -1;
}
.pane-tab {
    color: #15286e;
}
.pane-tab:first-of-type {
    margin-left: -9px;
}
.pane-close {
    margin-left: auto;
}
.thumbs {
    display: flex;
    flex-direction: column;
    gap: 3px;
    margin: 0;
    padding: 4px 4px 0 0;
    list-style: none;
    overflow: hidden;
}
.thumbs li {
    padding: 3px 3px 3px 5px;
    border: 1px solid transparent;
    border-left: 0;
}
.thumbs .selected {
    border-color: #e07a1c;
    background: linear-gradient(#fcd9a6, #f6b55e 35%, #ee9a2e 40%, #f9b84f);
    box-shadow: inset 0 0 0 1px #f7a947;
}
.thumbs svg {
    width: 100%;
    height: auto;
    background: #fff;
    outline: 1px solid #56739b;
    outline-offset: -1px;
    box-shadow: 1px 2px 3px #2f4a73;
}
.thumb-company, .thumb-title, .thumb-cell, .thumb-red {
    text-anchor: middle;
}
.thumb-company {
    font-size: 8px;
    fill: #123;
}
.thumb-title {
    font: bold 14px "Liberation Sans", "Noto Sans CJK SC", sans-serif;
    fill: #000;
}
.thumb-text, .thumb-cell {
    font-size: 4px;
    font-weight: bold;
    fill: #000;
}
.thumb-heading {
    font-size: 5px;
    font-weight: bold;
    fill: #000;
}
.thumb-red {
    font-size: 4px;
    font-weight: bold;
    fill: #f00;
}
.thumb-legend {
    font-size: 2px;
    fill: #222;
}
.scrollbar {
    display: flex;
    flex-direction: column;
    align-items: center;
    padding: 6px 1px 5px 2px;
    background: linear-gradient(90deg, #6283b4, #86a5d2);
}
.scrollbar .caret {
    border-width: 5px;
    border-top-color: #41548a;
    border-bottom: 0;
}
.scrollbar .up {
    border-top: 0;
    border-bottom: 5px solid #555a80;
}
.scrollbar .down {
    margin-top: auto;
}
.scroll-thumb {
    width: 100%;
    height: 122px;
    margin-top: 6px;
    border: 1px solid #54719f;
    border-radius: 2px;
    background: repeating-linear-gradient(#7a8a9f 0 1px, transparent 1px 2px) center / 8px 8px no-repeat, linear-gradient(90deg, #f2f5f9, #cdd6e2);
}
.editor {
    display: flex;
    flex-direction: column;
    min-width: 0;
    min-height: 0;
    border-left: 1px solid #5f8fd0;
}
.stage {
    position: relative;
    flex: 1;
    min-height: 0;
    padding: 14px 147px 0 148px;
    overflow: hidden;
    background: linear-gradient(#a3c1ea, #7c9dce 40%, #557db3 80%, #5f8bc9);
}
.swoosh {
    position: absolute;
    left: 0;
    top: 0;
}
.slide {
    position: relative;
    height: 620px;
    padding: 21px 20px 0 21px;
    background: #fff;
    box-shadow: 3px 3px 7px #2c4369;
    color: #000;
    font-family: "Liberation Sans", "Noto Sans CJK SC", sans-serif;
}
.slide h3 {
    margin: 0;
    font-size: 21px;
    font-weight: 500;
}
.slide-title {
    margin: 0 0 4px;
    height: 45px;
    padding-left: 8px;
    border: 1px solid #000;
    font-size: 28px;
    font-weight: 500;
    line-height: 43px;
}
.slide-content {
    padding: 6px 0 0 7px;
    background: #d9d9d9;
}
.charts {
    display: grid;
    grid-template-columns: 366px 1fr;
    height: 284px;
}
.bar-chart {
    border: 1px solid #f00;
}
.bar-chart h3 {
    padding: 7px 24px 0 0;
    line-height: 32px;
    text-align: center;
}
.bars {
    display: grid;
    grid-template-columns: 105px 1fr;
    grid-template-rows: repeat(13, 1fr);
    height: 213px;
    margin: 9px 0 0;
    font-size: 13px;
    line-height: 16px;
}
.bars dt {
    padding-right: 6px;
    font-weight: bold;
    text-align: right;
}
.bars dd {
    position: relative;
    display: flex;
    align-items: center;
    gap: 6px;
    margin: 0;
    border-left: 1px solid #868686;
}
.bars dd::before {
    content: "";
    position: absolute;
    left: -4px;
    top: 0;
    width: 4px;
    height: 1px;
    background: #868686;
}
.bars dd:last-child {
    background: linear-gradient(#868686, #868686) 0 100% / 1px 1px no-repeat;
}
.bars i {
    width: calc(var(--v) / 7400 * 100%);
    height: 7px;
    background: #b9dfe1;
}
.bars .orange { background: #ffc000; }
.bars .red { background: #f00; }
.bars .dark-red { background: #c00000; }
.pie-chart {
    display: flex;
    border: 1px solid #c8464a;
    background: #fff;
}
.pie-main {
    flex: 1;
}
.pie-main svg {
    width: 100%;
    height: auto;
}
.slide .pie-main h3 {
    margin: 3px 52px 0 66px;
    background: #d9d9d9;
    font-family: "Liberation Mono", "Noto Sans CJK SC", monospace;
    font-size: 15px;
    font-weight: bold;
    line-height: 26px;
    text-align: center;
    color: #f00;
}
.pie-labels {
    font: 8px "Noto Sans", sans-serif;
    text-anchor: middle;
    fill: #111;
}
.legend {
    display: grid;
    grid-template-rows: repeat(13, 1fr);
    width: 81px;
    height: 250px;
    margin: 26px 0 0;
    padding: 0;
    list-style: none;
    font-size: 10px;
    white-space: nowrap;
}
.legend li {
    display: flex;
    align-items: center;
    gap: 2px;
}
.legend i {
    width: 6px;
    height: 6px;
}
.c1 { background: #657d38; }
.c2 { background: #c00000; }
.c3 { background: #718d3e; }
.c4 { background: #7d9c46; }
.c5 { background: #8ba64e; }
.c6 { background: #94b255; }
.c7 { background: #9bbb59; }
.c8 { background: #f00; }
.c9 { background: #ff0; }
.c10 { background: #bccda3; }
.c11 { background: #cddab8; }
.c12 { background: #d6e1c8; }
.c13 { background: #dfe8d3; }
.section-title {
    margin: 0;
    height: 34px;
    padding-left: 8px;
    border: 1px solid #c00000;
    border-bottom: 0;
    font-size: 21px;
    line-height: 32px;
}
.slide table {
    width: 100%;
    table-layout: fixed;
    border-collapse: collapse;
    font-size: 21px;
}
.slide th, .slide td {
    height: 33px;
    padding: 0;
    border: 1px solid #222;
    font-weight: normal;
    line-height: 32px;
    text-align: center;
}
.notes {
    flex: none;
    height: 34px;
    padding: 6px 9px;
    border: 0;
    border-top: 6px solid #a9cbf9;
    border-bottom: 1px solid #4f7ebc;
    resize: none;
    background: #fff;
    font: 16px/20px "Noto Sans", "Noto Sans CJK SC", sans-serif;
    overflow: hidden;
}
.notes::placeholder {
    color: #000;
    opacity: 1;
}

/* status bar */
.status {
    display: flex;
    height: 5px;
    flex: none;
    overflow: hidden;
    border-top: 1px solid #f3f8ff;
    background: #c6dcf9;
}
.cell {
    border-right: 1px solid #86a9d8;
}
.cell-slide { width: 58px; }
.cell-theme { width: 104px; }
.cell-lang { width: 142px; }
.cell-fill { flex: 1; }
.views {
    display: flex;
    width: 57px;
    height: 20px;
    margin: 1px 0 0 5px;
    border: 1px solid #5b7fb0;
    border-radius: 3px;
}
.views button {
    flex: 1;
    background: #dbe8f9;
}
.views button:first-child {
    background: #f8cf8d;
}
.zoom {
    margin-left: 4px;
}
```
